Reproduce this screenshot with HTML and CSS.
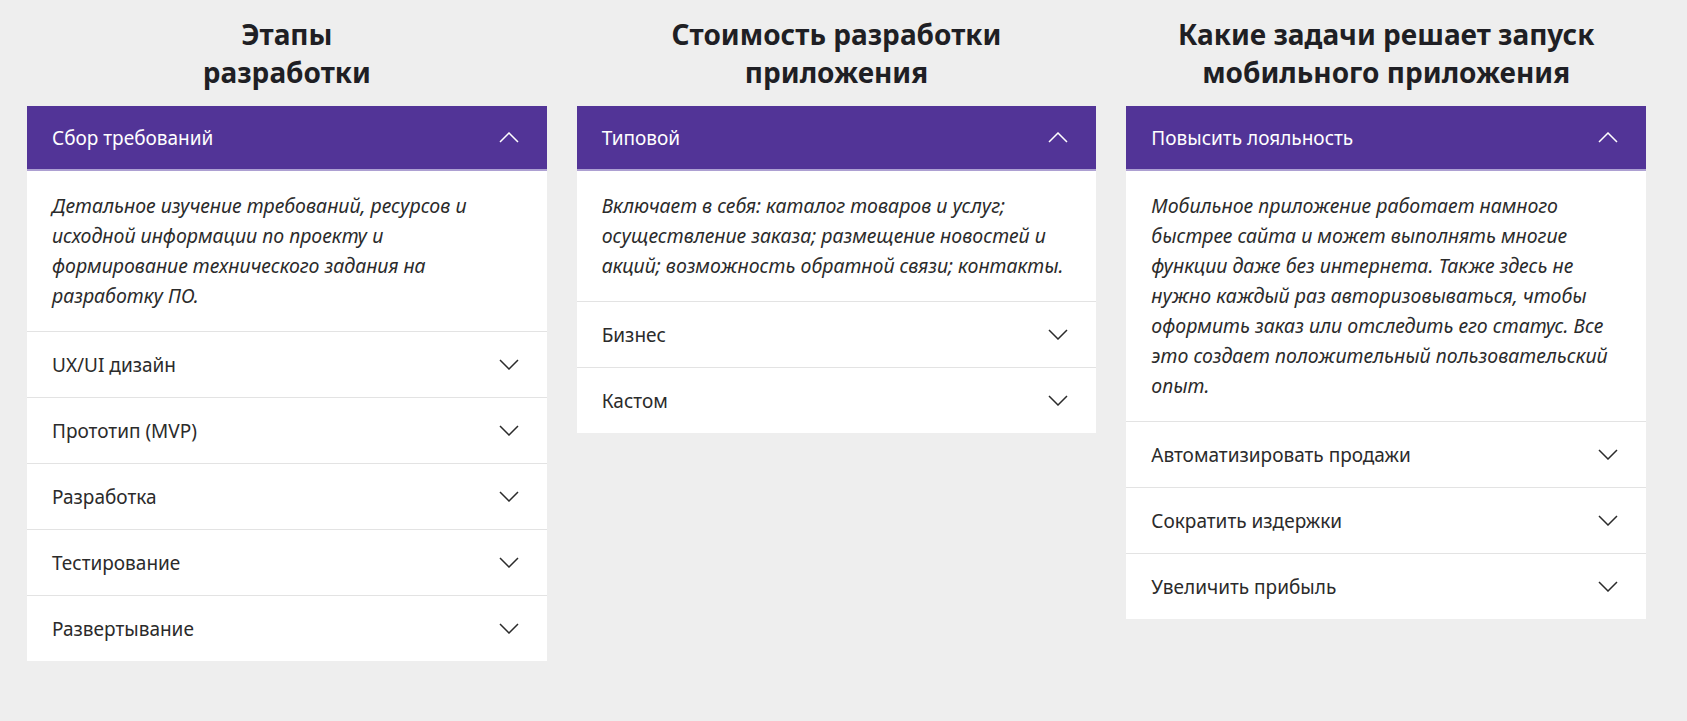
FILE: index.html
```html
<!DOCTYPE html>
<html lang="ru">
<head>
<meta charset="utf-8">
<title>Мобильные приложения</title>
<link rel="stylesheet" href="styles.css">
</head>
<body>
<main class="page">
  <section class="col">
    <h2 class="col-title">Этапы<br>разработки</h2>
    <div class="acc">
      <div class="acc-item open">
        <div class="acc-head"><span>Сбор требований</span><svg class="chev" viewBox="0 0 20 11"><polyline points="1,10 10,1 19,10"/></svg></div>
        <p class="acc-body">Детальное изучение требований, ресурсов и исходной информации по проекту и формирование технического задания на разработку ПО.</p>
      </div>
      <div class="acc-item"><div class="acc-head"><span>UX/UI дизайн</span><svg class="chev" viewBox="0 0 20 11"><polyline points="1,1 10,10 19,1"/></svg></div></div>
      <div class="acc-item"><div class="acc-head"><span>Прототип (MVP)</span><svg class="chev" viewBox="0 0 20 11"><polyline points="1,1 10,10 19,1"/></svg></div></div>
      <div class="acc-item"><div class="acc-head"><span>Разработка</span><svg class="chev" viewBox="0 0 20 11"><polyline points="1,1 10,10 19,1"/></svg></div></div>
      <div class="acc-item"><div class="acc-head"><span>Тестирование</span><svg class="chev" viewBox="0 0 20 11"><polyline points="1,1 10,10 19,1"/></svg></div></div>
      <div class="acc-item"><div class="acc-head"><span>Развертывание</span><svg class="chev" viewBox="0 0 20 11"><polyline points="1,1 10,10 19,1"/></svg></div></div>
    </div>
  </section>
  <section class="col">
    <h2 class="col-title">Стоимость разработки<br>приложения</h2>
    <div class="acc">
      <div class="acc-item open">
        <div class="acc-head"><span>Типовой</span><svg class="chev" viewBox="0 0 20 11"><polyline points="1,10 10,1 19,10"/></svg></div>
        <p class="acc-body">Включает в себя: каталог товаров и услуг; осуществление заказа; размещение новостей и акций; возможность обратной связи; контакты.</p>
      </div>
      <div class="acc-item"><div class="acc-head"><span>Бизнес</span><svg class="chev" viewBox="0 0 20 11"><polyline points="1,1 10,10 19,1"/></svg></div></div>
      <div class="acc-item"><div class="acc-head"><span>Кастом</span><svg class="chev" viewBox="0 0 20 11"><polyline points="1,1 10,10 19,1"/></svg></div></div>
    </div>
  </section>
  <section class="col">
    <h2 class="col-title">Какие задачи решает запуск<br>мобильного приложения</h2>
    <div class="acc">
      <div class="acc-item open">
        <div class="acc-head"><span>Повысить лояльность</span><svg class="chev" viewBox="0 0 20 11"><polyline points="1,10 10,1 19,10"/></svg></div>
        <p class="acc-body">Мобильное приложение работает намного быстрее сайта и может выполнять многие функции даже без интернета. Также здесь не нужно каждый раз авторизовываться, чтобы оформить заказ или отследить его статус. Все это создает положительный пользовательский опыт.</p>
      </div>
      <div class="acc-item"><div class="acc-head"><span>Автоматизировать продажи</span><svg class="chev" viewBox="0 0 20 11"><polyline points="1,1 10,10 19,1"/></svg></div></div>
      <div class="acc-item"><div class="acc-head"><span>Сократить издержки</span><svg class="chev" viewBox="0 0 20 11"><polyline points="1,1 10,10 19,1"/></svg></div></div>
      <div class="acc-item"><div class="acc-head"><span>Увеличить прибыль</span><svg class="chev" viewBox="0 0 20 11"><polyline points="1,1 10,10 19,1"/></svg></div></div>
    </div>
  </section>
</main>
</body>
</html>
```

FILE: styles.css
```css
html, body {
  margin: 0;
  padding: 0;
  background: #eeeeee;
}
body {
  font-family: "Noto Sans", "Open Sans", sans-serif;
  color: #2b2b2b;
}
.page {
  display: grid;
  grid-template-columns: repeat(3, 1fr);
  column-gap: 30px;
  width: 1619px;
  padding: 15px 0 0 27px;
  align-items: start;
}
.col-title {
  margin: 0 0 15px;
  font-size: 28px;
  line-height: 38px;
  font-weight: 700;
  text-align: center;
  color: #1f1f24;
}
.acc {
  background: #fff;
}
.acc-item + .acc-item {
  border-top: 1px solid #e3e3e3;
}
.acc-head {
  display: flex;
  align-items: center;
  justify-content: space-between;
  height: 65px;
  padding: 0 28px 0 25px;
  font-size: 19px;
  color: #2b2b2b;
}
.open .acc-head {
  height: 63px;
  background: #523497;
  color: #fff;
  border-bottom: 2px solid #ada0d2;
  box-sizing: content-box;
}
.chev {
  width: 20px;
  height: 11px;
  flex: none;
  fill: none;
  stroke: #2b2b2b;
  stroke-width: 1.5;
}
.open .chev {
  stroke: #fff;
}
.acc-body {
  margin: 0;
  padding: 20px 32px 20px 25px;
  font-size: 19.5px;
  line-height: 30px;
  font-style: italic;
  color: #2b2b2b;
}
```
